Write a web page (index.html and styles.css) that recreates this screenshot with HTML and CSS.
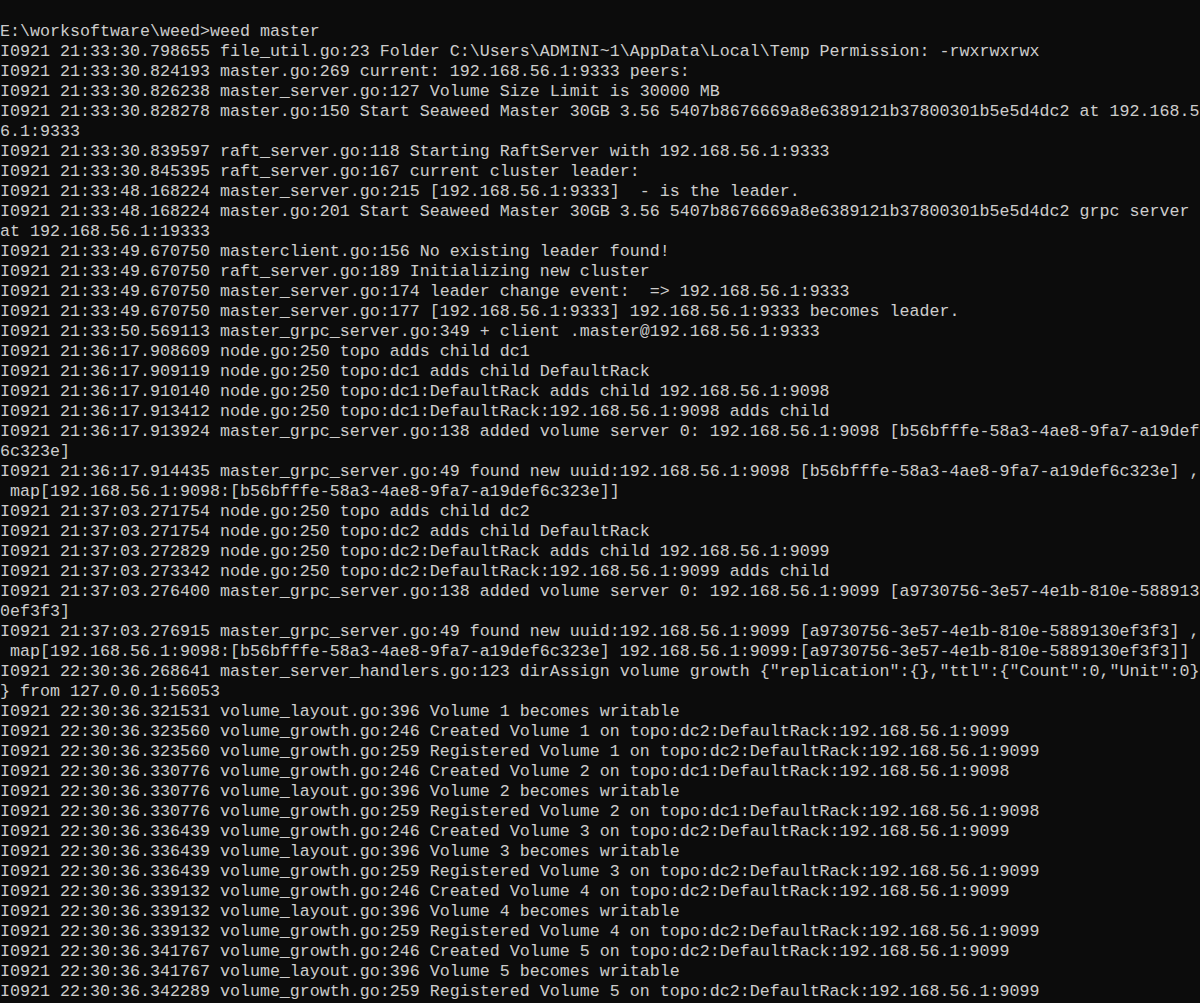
FILE: index.html
```html
<!DOCTYPE html>
<html lang="en">
<head>
<meta charset="utf-8">
<title>weed master</title>
<link rel="stylesheet" href="styles.css">
</head>
<body>
<div class="console">
<div class="line"> </div>
<div class="line">E:\worksoftware\weed&gt;weed master</div>
<div class="line">I0921 21:33:30.798655 file_util.go:23 Folder C:\Users\ADMINI~1\AppData\Local\Temp Permission: -rwxrwxrwx</div>
<div class="line">I0921 21:33:30.824193 master.go:269 current: 192.168.56.1:9333 peers:</div>
<div class="line">I0921 21:33:30.826238 master_server.go:127 Volume Size Limit is 30000 MB</div>
<div class="line">I0921 21:33:30.828278 master.go:150 Start Seaweed Master 30GB 3.56 5407b8676669a8e6389121b37800301b5e5d4dc2 at 192.168.5</div>
<div class="line">6.1:9333</div>
<div class="line">I0921 21:33:30.839597 raft_server.go:118 Starting RaftServer with 192.168.56.1:9333</div>
<div class="line">I0921 21:33:30.845395 raft_server.go:167 current cluster leader:</div>
<div class="line">I0921 21:33:48.168224 master_server.go:215 [192.168.56.1:9333]  - is the leader.</div>
<div class="line">I0921 21:33:48.168224 master.go:201 Start Seaweed Master 30GB 3.56 5407b8676669a8e6389121b37800301b5e5d4dc2 grpc server</div>
<div class="line">at 192.168.56.1:19333</div>
<div class="line">I0921 21:33:49.670750 masterclient.go:156 No existing leader found!</div>
<div class="line">I0921 21:33:49.670750 raft_server.go:189 Initializing new cluster</div>
<div class="line">I0921 21:33:49.670750 master_server.go:174 leader change event:  =&gt; 192.168.56.1:9333</div>
<div class="line">I0921 21:33:49.670750 master_server.go:177 [192.168.56.1:9333] 192.168.56.1:9333 becomes leader.</div>
<div class="line">I0921 21:33:50.569113 master_grpc_server.go:349 + client .master@192.168.56.1:9333</div>
<div class="line">I0921 21:36:17.908609 node.go:250 topo adds child dc1</div>
<div class="line">I0921 21:36:17.909119 node.go:250 topo:dc1 adds child DefaultRack</div>
<div class="line">I0921 21:36:17.910140 node.go:250 topo:dc1:DefaultRack adds child 192.168.56.1:9098</div>
<div class="line">I0921 21:36:17.913412 node.go:250 topo:dc1:DefaultRack:192.168.56.1:9098 adds child</div>
<div class="line">I0921 21:36:17.913924 master_grpc_server.go:138 added volume server 0: 192.168.56.1:9098 [b56bfffe-58a3-4ae8-9fa7-a19def</div>
<div class="line">6c323e]</div>
<div class="line">I0921 21:36:17.914435 master_grpc_server.go:49 found new uuid:192.168.56.1:9098 [b56bfffe-58a3-4ae8-9fa7-a19def6c323e] ,</div>
<div class="line"> map[192.168.56.1:9098:[b56bfffe-58a3-4ae8-9fa7-a19def6c323e]]</div>
<div class="line">I0921 21:37:03.271754 node.go:250 topo adds child dc2</div>
<div class="line">I0921 21:37:03.271754 node.go:250 topo:dc2 adds child DefaultRack</div>
<div class="line">I0921 21:37:03.272829 node.go:250 topo:dc2:DefaultRack adds child 192.168.56.1:9099</div>
<div class="line">I0921 21:37:03.273342 node.go:250 topo:dc2:DefaultRack:192.168.56.1:9099 adds child</div>
<div class="line">I0921 21:37:03.276400 master_grpc_server.go:138 added volume server 0: 192.168.56.1:9099 [a9730756-3e57-4e1b-810e-588913</div>
<div class="line">0ef3f3]</div>
<div class="line">I0921 21:37:03.276915 master_grpc_server.go:49 found new uuid:192.168.56.1:9099 [a9730756-3e57-4e1b-810e-5889130ef3f3] ,</div>
<div class="line"> map[192.168.56.1:9098:[b56bfffe-58a3-4ae8-9fa7-a19def6c323e] 192.168.56.1:9099:[a9730756-3e57-4e1b-810e-5889130ef3f3]]</div>
<div class="line">I0921 22:30:36.268641 master_server_handlers.go:123 dirAssign volume growth {"replication":{},"ttl":{"Count":0,"Unit":0}</div>
<div class="line">} from 127.0.0.1:56053</div>
<div class="line">I0921 22:30:36.321531 volume_layout.go:396 Volume 1 becomes writable</div>
<div class="line">I0921 22:30:36.323560 volume_growth.go:246 Created Volume 1 on topo:dc2:DefaultRack:192.168.56.1:9099</div>
<div class="line">I0921 22:30:36.323560 volume_growth.go:259 Registered Volume 1 on topo:dc2:DefaultRack:192.168.56.1:9099</div>
<div class="line">I0921 22:30:36.330776 volume_growth.go:246 Created Volume 2 on topo:dc1:DefaultRack:192.168.56.1:9098</div>
<div class="line">I0921 22:30:36.330776 volume_layout.go:396 Volume 2 becomes writable</div>
<div class="line">I0921 22:30:36.330776 volume_growth.go:259 Registered Volume 2 on topo:dc1:DefaultRack:192.168.56.1:9098</div>
<div class="line">I0921 22:30:36.336439 volume_growth.go:246 Created Volume 3 on topo:dc2:DefaultRack:192.168.56.1:9099</div>
<div class="line">I0921 22:30:36.336439 volume_layout.go:396 Volume 3 becomes writable</div>
<div class="line">I0921 22:30:36.336439 volume_growth.go:259 Registered Volume 3 on topo:dc2:DefaultRack:192.168.56.1:9099</div>
<div class="line">I0921 22:30:36.339132 volume_growth.go:246 Created Volume 4 on topo:dc2:DefaultRack:192.168.56.1:9099</div>
<div class="line">I0921 22:30:36.339132 volume_layout.go:396 Volume 4 becomes writable</div>
<div class="line">I0921 22:30:36.339132 volume_growth.go:259 Registered Volume 4 on topo:dc2:DefaultRack:192.168.56.1:9099</div>
<div class="line">I0921 22:30:36.341767 volume_growth.go:246 Created Volume 5 on topo:dc2:DefaultRack:192.168.56.1:9099</div>
<div class="line">I0921 22:30:36.341767 volume_layout.go:396 Volume 5 becomes writable</div>
<div class="line">I0921 22:30:36.342289 volume_growth.go:259 Registered Volume 5 on topo:dc2:DefaultRack:192.168.56.1:9099</div>
</div>
</body>
</html>
```

FILE: styles.css
```css
html, body {
  margin: 0;
  padding: 0;
  background: #0c0c0c;
  height: 100%;
  overflow: hidden;
}

.console {
  display: flex;
  flex-direction: column;
  width: 1200px;
  color: #cccccc;
  background: #0c0c0c;
  font-family: "Liberation Mono", "DejaVu Sans Mono", monospace;
  font-size: 16.6667px;
  line-height: 20px;
}

.line {
  height: 20px;
  line-height: 20px;
  padding-top: 2px;
  box-sizing: border-box;
  white-space: pre;
  overflow: hidden;
}
```
